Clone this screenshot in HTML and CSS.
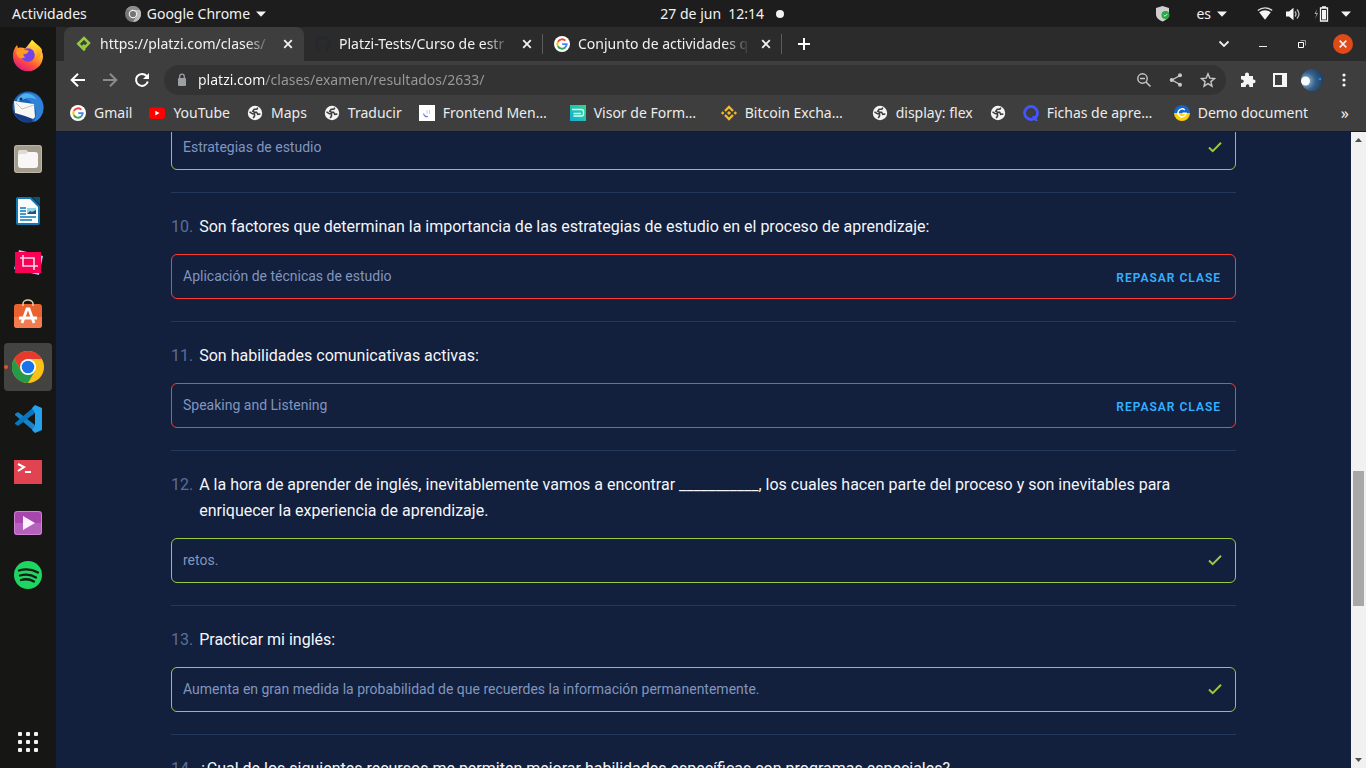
FILE: index.html
```html
<!DOCTYPE html>
<html lang="es">
<head>
<meta charset="utf-8">
<title>Resultados del examen</title>
<link rel="stylesheet" href="styles.css">
</head>
<body>
<svg class="defs" aria-hidden="true">
  <symbol id="check" viewBox="0 0 16 16"><path d="M2 8.5l3.7 3.7L14 3.8" fill="none" stroke="#98ca3f" stroke-width="2"/></symbol>
  <symbol id="close" viewBox="0 0 16 16"><path d="M4.2 4.2l7.6 7.6M11.8 4.2l-7.6 7.6" fill="none" stroke="#f1f1f1" stroke-width="1.8"/></symbol>
  <symbol id="caret" viewBox="0 0 10 6"><path d="M0 0.5h10L5 5.7z" fill="#f2f2f2"/></symbol>
  <symbol id="google" viewBox="0 0 16 16">
    <circle cx="8" cy="8" r="8" fill="#fff"/>
    <path d="M11.4 4.7A4.7 4.7 0 0 0 3.9 5.9" fill="none" stroke="#ea4335" stroke-width="1.9"/>
    <path d="M3.9 5.8a4.7 4.7 0 0 0 0 4.5" fill="none" stroke="#fbbc05" stroke-width="1.9"/>
    <path d="M3.9 10.2a4.7 4.7 0 0 0 7.3 1.3" fill="none" stroke="#34a853" stroke-width="1.9"/>
    <path d="M11.1 11.6A4.7 4.7 0 0 0 12.7 8.1H8.2" fill="none" stroke="#4285f4" stroke-width="1.9"/>
  </symbol>
  <symbol id="globe" viewBox="0 0 16 16">
    <circle cx="8" cy="8" r="7.2" fill="#f5f5f5"/>
    <path d="M2.500 6.800L5.500 8.800H7.500V11L6.200 13.200M10.800 2.600L9.800 4.300H7.200L5.800 6.200 7.400 7.200H9.600L10.800 9.300 13.400 9" fill="none" stroke="#3e3e3e" stroke-width="1.600"/>
  </symbol>
</svg>

<header class="topbar">
  <div class="topbar-group">
    <button class="plain">Actividades</button>
    <button class="plain app-menu">
      <svg width="16" height="16" viewBox="0 0 16 16"><circle cx="8" cy="8" r="8" fill="#777"/><path d="M8 4h7A8 8 0 0 1 8 16l3.500-6z" fill="#bbb"/><path d="M1 4a8 8 0 0 1 14 0H8z" fill="#8d8d8d"/><circle cx="8" cy="8" r="4.300" fill="#eee"/><circle cx="8" cy="8" r="3.100" fill="#757575"/></svg>
      <span>Google Chrome</span>
      <svg width="10" height="6"><use href="#caret"/></svg>
    </button>
  </div>
  <button class="plain clock"><span>27 de jun&nbsp; 12:14</span><i class="dot"></i></button>
  <div class="topbar-group status">
    <svg width="14" height="16" viewBox="0 0 14 16"><path d="M6.500 0L13 2v6c0 4-3 6-6.500 7.500C3 14 0 12 0 8V2z" fill="#cfcfcf"/><circle cx="9.500" cy="9" r="4" fill="#28a745"/><path d="M7.700 9l1.300 1.300 2.400-2.500" fill="none" stroke="#d8ffd8" stroke-width="1"/></svg>
    <button class="plain lang"><span>es</span><svg width="10" height="6"><use href="#caret"/></svg></button>
    <button class="plain tray" aria-label="Sistema">
      <svg width="16" height="14" viewBox="0 0 16 14"><path d="M.8 3.500a11 11 0 0 1 14.400 0" fill="none" stroke="#ddd" stroke-width="1.200"/><path d="M2.200 5.200a9.500 9.500 0 0 1 11.600 0L8 12.800z" fill="#f5f5f5"/></svg>
      <svg width="16" height="14" viewBox="0 0 16 14"><path d="M1 4.500h3L8.500.8v12.400L4 9.500H1z" fill="#f5f5f5"/><path d="M10 4.500q2 2.500 0 5M12 2.500q4 4.500 0 9" fill="none" stroke="#bbb" stroke-width="1.300"/></svg>
      <svg width="16" height="16" viewBox="0 0 16 16"><path d="M4 3L1.500 8h2L2 13l3-6H3z" fill="#aaa"/><path d="M7.500 2h7v13h-7zM9 .8h4" fill="none" stroke="#f5f5f5" stroke-width="1.300"/><path d="M9 4h4v9.500H9z" fill="#f5f5f5"/></svg>
      <svg width="10" height="6"><use href="#caret"/></svg>
    </button>
  </div>
</header>

<div class="desktop">
  <nav class="dock" aria-label="Aplicaciones">
    <button class="dock-item" aria-label="Firefox"><svg width="32" height="32" viewBox="0 0 32 32">
      <defs><linearGradient id="ff" x1=".8" y1=".1" x2=".25" y2="1"><stop offset="0" stop-color="#fff44f"/><stop offset=".35" stop-color="#ffa62b"/><stop offset=".65" stop-color="#ff5139"/><stop offset="1" stop-color="#e0118a"/></linearGradient><linearGradient id="fy" x2="0" y2="1"><stop stop-color="#fff13c"/><stop offset="1" stop-color="#ff8a16"/></linearGradient></defs>
      <path d="M20 1c3 3 5 5 6 7 3 2 5 6 5 9.500A15 15 0 0 1 1 17c0-5 1.500-8 4-11l1 3c3-.8 5-.4 7 .5 2-2 4-4.500 7-8.500z" fill="url(#ff)"/><circle cx="16" cy="16" r="6.800" fill="#7542e5"/><path d="M5 10c3-2 6-1 8 .8l4 1-2 2.700-4 1 2 3-5 1c-4-3-4-6-3-9.500z" fill="#ff9a27"/><path d="M20 1c-2 4 0 7 3 9 2 3 2 8-1 11 5-1 8-5 8-10-2-5-7-6-10-10z" fill="url(#fy)"/></svg></button>
    <button class="dock-item" aria-label="Thunderbird"><svg width="32" height="32" viewBox="0 0 32 32"><circle cx="16" cy="16" r="15.500" fill="#1d62b5"/><path d="M7 6C12-1 27 0 31 13c2 9-3 16-9 18 3-8 3-14-2-19S10 6 7 6z" fill="#2f82d8"/><path d="M5 8c5-7 14-8 20 1-8-5-12-1-20 2z" fill="#4fb2ee"/><path d="M1 19c3 9 10 13 19 12l1-6z" fill="#183a85"/><path d="M2 10l6 1 14 2 1 13-2 2-8-3-10-3z" fill="#f6f6f2"/><path d="M4 12l6 6 12-4" fill="none" stroke="#c5c3bb" stroke-width="1"/><circle cx="9" cy="8" r="1.500" fill="#132b52"/></svg></button>
    <button class="dock-item" aria-label="Archivos"><svg width="32" height="32" viewBox="0 0 32 32"><rect x="2" y="2" width="28" height="28" rx="3" fill="#a39c8c"/><rect x="2.500" y="2.500" width="27" height="27" rx="3" fill="none" stroke="#beb7a9"/><path d="M6 10c0-2 1-3 3-3h5l2 2h7c2 0 3 1 3 3v10c0 2-1 3-3 3H9c-2 0-3-1-3-3z" fill="#f8f7f5"/><path d="M6 12V9c0-1 1-2 2-2h6l2 2-2 2H8z" fill="#dedbd3"/></svg></button>
    <button class="dock-item" aria-label="Writer"><svg width="32" height="32" viewBox="0 0 32 32"><path d="M6 2h13l9 9v17q0 2-2 2H6q-2 0-2-2V4q0-2 2-2z" fill="#1379b5"/><path d="M6 4h12l8 8v16H6z" fill="#fafcfd"/><path d="M20 2h8v8z" fill="#0b4f7d"/><path d="M8 13h6m-6 3h6m-6 3h6m-6 3h16M8 25h12" stroke="#087bbb" stroke-width="1.300"/><path d="M15 13h9v6h-9z" fill="#91d2ed"/><path d="M15 19l3-3 2 1 4-2v4z" fill="#2b526a"/></svg></button>
    <button class="dock-item" aria-label="Recortes"><svg width="32" height="32" viewBox="0 0 32 32"><path d="M7 3l24 6-4 19-25-6z" fill="#a9c8ff"/><path d="M3 5h26v21H3z" fill="#f80056"/><path d="M8 11h14v12M11 8v11h15" fill="none" stroke="#ffd9e6" stroke-width="1.600"/></svg></button>
    <button class="dock-item" aria-label="Software"><svg width="32" height="32" viewBox="0 0 32 32"><rect x="2" y="5" width="28" height="24" rx="3" fill="#e96331"/><path d="M2 18h28v8q0 3-3 3H5q-3 0-3-3z" fill="#f27c4d"/><path d="M11 7V4.500a5 3.500 0 0 1 10 0V7" fill="none" stroke="#e5cfad" stroke-width="1.500"/><path d="M10 24l5-14h2l5 14M7 19h18" fill="none" stroke="#fff" stroke-width="2.800"/></svg></button>
    <button class="dock-item active" aria-label="Google Chrome"><i class="running"></i><svg width="32" height="32" viewBox="0 0 32 32"><circle cx="16" cy="16" r="16" fill="#fbc116"/><path d="M2.140 8A16 16 0 0 1 29.860 8H16L9.070 20z" fill="#e33b2e"/><path d="M2.140 8A16 16 0 0 0 16 32l6.930-12H9.070z" fill="#269a47"/><circle cx="16" cy="16" r="8" fill="#fff"/><circle cx="16" cy="16" r="6.300" fill="#1a73e8"/></svg></button>
    <button class="dock-item" aria-label="Visual Studio Code"><svg width="32" height="32" viewBox="0 0 32 32"><path d="M3 11l3-2 17 13v7L3 12z" fill="#1684cd"/><path d="M3 21l3 2 17-13V3L3 20z" fill="#0877bd"/><path d="M23 2l7 3v22l-7 3-3-3 3-4V10l-3-5z" fill="#25a2ed"/></svg></button>
    <button class="dock-item" aria-label="Terminal"><svg width="32" height="32" viewBox="0 0 32 32"><path d="M2 5h28v24H2z" fill="#e14350"/><path d="M6 9l6 3-6 4M13 17h6" fill="none" stroke="#fff" stroke-width="2"/></svg></button>
    <button class="dock-item" aria-label="Videos"><svg width="32" height="32" viewBox="0 0 32 32"><rect x="2" y="4" width="28" height="24" rx="3" fill="#a846ad"/><path d="M2 16h28v9q0 3-3 3H5q-3 0-3-3z" fill="#b562bd"/><rect x="2.500" y="4.500" width="27" height="23" rx="3" fill="none" stroke="#d184d1"/><path d="M11 9l12 7-12 7z" fill="#fff0ff"/></svg></button>
    <button class="dock-item" aria-label="Spotify"><svg width="32" height="32" viewBox="0 0 32 32"><circle cx="16" cy="16" r="14" fill="#1ed760"/><path d="M7 11.500q10-3 19 2M8 16.500q9-2.500 16 2M9 21q7-2 13 1.500" fill="none" stroke="#161b17" stroke-width="2.300" stroke-linecap="round"/></svg></button>
    <button class="dock-item apps" aria-label="Mostrar aplicaciones"><svg width="22" height="22" viewBox="0 0 22 22" fill="#f3f3f3"><rect x="1" y="1" width="4" height="4" rx="1"/><rect x="9" y="1" width="4" height="4" rx="1"/><rect x="17" y="1" width="4" height="4" rx="1"/><rect x="1" y="9" width="4" height="4" rx="1"/><rect x="9" y="9" width="4" height="4" rx="1"/><rect x="17" y="9" width="4" height="4" rx="1"/><rect x="1" y="17" width="4" height="4" rx="1"/><rect x="9" y="17" width="4" height="4" rx="1"/><rect x="17" y="17" width="4" height="4" rx="1"/></svg></button>
  </nav>

  <div class="browser">
    <div class="tabstrip">
      <div class="tab current">
        <svg width="16" height="16" viewBox="0 0 16 16"><path d="M6.900 8.900L9.100 11.100 13 7 8 2 2.200 7.800 8.800 14.400" fill="none" stroke="#98ca3f" stroke-width="2.500"/></svg>
        <span class="tab-title">https://platzi.com/clases/</span>
        <button class="tab-close" aria-label="Cerrar"><svg width="16" height="16"><use href="#close"/></svg></button>
      </div>
      <div class="tab">
        <svg width="16" height="16" viewBox="0 0 16 16"><path d="M8 .3a7.700 7.700 0 0 0-2.500 15v-2.500c-2 .3-2.600-1-3.200-1.900 1.200 0 1.600 1.300 3.200 1l.4-1c-3.500-.7-4-4-2.300-6.300V2.500l2.400.9q2-.5 4 0l2.400-.9v2.100c1.700 2.300 1.200 5.600-2.300 6.300l.5 1.200v3.200A7.700 7.700 0 0 0 8 .3z" fill="#24292f"/></svg>
        <span class="tab-title">Platzi-Tests/Curso de estr</span>
        <button class="tab-close" aria-label="Cerrar"><svg width="16" height="16"><use href="#close"/></svg></button>
      </div>
      <div class="tab">
        <svg width="16" height="16"><use href="#google"/></svg>
        <span class="tab-title">Conjunto de actividades q</span>
        <button class="tab-close" aria-label="Cerrar"><svg width="16" height="16"><use href="#close"/></svg></button>
      </div>
      <button class="new-tab" aria-label="Nueva pestaña"><svg width="14" height="14" viewBox="0 0 14 14"><path d="M7 1v12M1 7h12" stroke="#fff" stroke-width="2"/></svg></button>
      <div class="window-controls">
        <button aria-label="Buscar pestañas"><svg width="12" height="12" viewBox="0 0 12 12"><path d="M1.500 3.500L6 8l4.500-4.500" fill="none" stroke="#eee" stroke-width="1.800"/></svg></button>
        <button aria-label="Minimizar"><svg width="12" height="12" viewBox="0 0 12 12"><path d="M2 8.500h8" stroke="#eee"/></svg></button>
        <button aria-label="Restaurar"><svg width="12" height="12" viewBox="0 0 12 12"><path d="M2.500 4.500h5v5h-5z" fill="none" stroke="#fff"/><path d="M4.500 2.500h5v5" fill="none" stroke="#999"/></svg></button>
        <button class="window-close" aria-label="Cerrar ventana"><svg width="14" height="14"><use href="#close"/></svg></button>
      </div>
    </div>

    <div class="toolbar">
      <button class="tool" aria-label="Atrás"><svg width="16" height="16" viewBox="0 0 16 16"><path d="M15 8H2M8 1.700L1.700 8 8 14.300" fill="none" stroke="#fff" stroke-width="2"/></svg></button>
      <button class="tool" aria-label="Adelante"><svg width="16" height="16" viewBox="0 0 16 16"><path d="M1 8h13M8 1.700L14.300 8 8 14.300" fill="none" stroke="#8b8b8b" stroke-width="2"/></svg></button>
      <button class="tool" aria-label="Recargar"><svg width="16" height="16" viewBox="0 0 16 16"><path d="M13.800 9.500A6 6 0 1 1 12.600 4" fill="none" stroke="#fff" stroke-width="2"/><path d="M15 1v6H9z" fill="#fff"/></svg></button>
      <div class="omnibox">
        <svg width="12" height="14" viewBox="0 0 12 14"><rect x="2" y="5" width="8" height="8" rx="1" fill="#9aa0a6"/><path d="M3.700 5V3.400a2.300 2.300 0 0 1 4.600 0V5" fill="none" stroke="#9aa0a6" stroke-width="1.300"/></svg>
        <input class="url" type="text" aria-label="Dirección" value="platzi.com/clases/examen/resultados/2633/">
        <button class="tool" aria-label="Zoom"><svg width="16" height="16" viewBox="0 0 16 16"><circle cx="6.500" cy="6.500" r="4.700" fill="none" stroke="#c8c8c8" stroke-width="1.400"/><path d="M4 6.500h5M10 10l4.500 4.500" stroke="#c8c8c8" stroke-width="1.500"/></svg></button>
        <button class="tool" aria-label="Compartir"><svg width="16" height="16" viewBox="0 0 16 16"><path d="M12 3.500L4 8l8 4.500" fill="none" stroke="#c8c8c8" stroke-width="1.400"/><circle cx="12" cy="3.300" r="2" fill="#c8c8c8"/><circle cx="3.700" cy="8" r="2" fill="#c8c8c8"/><circle cx="12" cy="12.700" r="2" fill="#c8c8c8"/></svg></button>
        <button class="tool" aria-label="Marcador"><svg width="16" height="16" viewBox="0 0 16 16"><path d="M8 1.800l1.800 4.300 4.700.4-3.600 3.100 1.100 4.600L8 11.700l-4 2.500 1.100-4.600-3.600-3.100 4.700-.4z" fill="none" stroke="#c8c8c8" stroke-width="1.400"/></svg></button>
      </div>
      <button class="tool" aria-label="Extensiones"><svg width="16" height="16" viewBox="0 0 16 16"><path d="M1 4h4V2.500a2 2 0 0 1 4 0V4h4v3.500h.7a1.800 1.800 0 0 1 0 3.700H13V15H9.300v-1a1.700 1.700 0 0 0-3.500 0v1H1v-4h1a1.700 1.700 0 0 0 0-3.500H1z" fill="#f5f5f5"/></svg></button>
      <button class="tool" aria-label="Panel lateral"><svg width="16" height="16" viewBox="0 0 16 16"><path d="M1 1h14v14H1zM3 3v10h7V3z" fill="#f5f5f5" fill-rule="evenodd"/></svg></button>
      <button class="tool" aria-label="Perfil"><svg width="22" height="22" viewBox="0 0 22 22"><defs><radialGradient id="av" cx=".25" cy=".55" r=".8"><stop stop-color="#a9c6d8"/><stop offset=".5" stop-color="#34608a"/><stop offset="1" stop-color="#1d3a5c"/></radialGradient></defs><circle cx="11" cy="11" r="11" fill="url(#av)"/><circle cx="4.500" cy="12" r="4.500" fill="#f5fbff"/><circle cx="19" cy="10" r="1.300" fill="#1685ef"/></svg></button>
      <button class="tool" aria-label="Menú"><svg width="16" height="16" viewBox="0 0 16 16" fill="#f5f5f5"><circle cx="8" cy="3" r="1.600"/><circle cx="8" cy="8" r="1.600"/><circle cx="8" cy="13" r="1.600"/></svg></button>
    </div>

    <nav class="bookmarks" aria-label="Marcadores">
      <a href="#"><svg width="16" height="16"><use href="#google"/></svg><span>Gmail</span></a>
      <a href="#"><svg width="16" height="16" viewBox="0 0 16 16"><rect y="2.500" width="16" height="11.500" rx="3" fill="#f00"/><path d="M6.300 5.700L10.500 8l-4.200 2.500z" fill="#fff"/></svg><span>YouTube</span></a>
      <a href="#"><svg width="16" height="16"><use href="#globe"/></svg><span>Maps</span></a>
      <a href="#"><svg width="16" height="16"><use href="#globe"/></svg><span>Traducir</span></a>
      <a href="#"><svg width="16" height="16" viewBox="0 0 16 16"><path d="M0 0h16v16H0z" fill="#fff"/><path d="M4.500 8.500c.5 2.500 2.500 3.500 4.500 3" fill="none" stroke="#7778d4" stroke-width="1.200"/><path d="M8 5v4M10.500 5v4" stroke="#a9dce9"/></svg><span class="long">Frontend Men…</span></a>
      <a href="#"><svg width="16" height="16" viewBox="0 0 16 16"><defs><linearGradient id="vf" x1="0" y1="1" x2="1" y2="0"><stop stop-color="#12acd6"/><stop offset="1" stop-color="#35d58c"/></linearGradient></defs><path d="M0 0h16v16H0z" fill="url(#vf)"/><path d="M2 4.500h9.500a2 2 0 0 1 2 2v2.500a2 2 0 0 1-2 2H3.500M3.500 8.500h7.500" fill="none" stroke="#d6fff4" stroke-width="1.400"/></svg><span class="long">Visor de Form…</span></a>
      <a href="#"><svg width="16" height="16" viewBox="0 0 16 16"><path d="M4 6l4-4 4 4M4 10l4 4 4-4" fill="none" stroke="#f3ba2f" stroke-width="2.300"/><path d="M8 6l2 2-2 2-2-2zM1.700 6.300L3.400 8 1.700 9.700 0 8zM14.300 6.300L16 8l-1.700 1.700L12.600 8z" fill="#f3ba2f"/></svg><span class="long">Bitcoin Excha…</span></a>
      <a href="#"><svg width="16" height="16"><use href="#globe"/></svg><span>display: flex</span></a>
      <a href="#" aria-label="Marcador"><svg width="16" height="16"><use href="#globe"/></svg></a>
      <a href="#"><svg width="16" height="16" viewBox="0 0 16 16"><circle cx="8" cy="8" r="6.500" fill="none" stroke="#4255ff" stroke-width="2.800"/><path d="M9 11h3l3 5h-3z" fill="#4255ff"/></svg><span class="long">Fichas de apre…</span></a>
      <a href="#"><svg width="16" height="16" viewBox="0 0 16 16"><path d="M0 8a8 8 0 0 1 16 0z" fill="#1465c8"/><path d="M0 8a8 8 0 0 0 16 0z" fill="#fdd108"/><path d="M10.800 5A4 4 0 1 0 12 8.200H8.500" fill="none" stroke="#fff" stroke-width="1.500"/></svg><span>Demo document</span></a>
      <button class="more" aria-label="Más marcadores">»</button>
    </nav>

    <div class="viewport">
      <main class="page">
        <section class="question cut">
          <div class="answer right"><p>Estrategias de estudio</p><svg width="16" height="16"><use href="#check"/></svg></div>
        </section>
        <section class="question">
          <h2><span class="num">10.</span><span>Son factores que determinan la importancia de las estrategias de estudio en el proceso de aprendizaje:</span></h2>
          <div class="answer wrong"><p>Aplicación de técnicas de estudio</p><a href="#">REPASAR CLASE</a></div>
        </section>
        <section class="question">
          <h2><span class="num">11.</span><span>Son habilidades comunicativas activas:</span></h2>
          <div class="answer wrong"><p>Speaking and Listening</p><a href="#">REPASAR CLASE</a></div>
        </section>
        <section class="question">
          <h2><span class="num">12.</span><span>A la hora de aprender de inglés, inevitablemente vamos a encontrar ___________, los cuales hacen parte del proceso y son inevitables para enriquecer la experiencia de aprendizaje.</span></h2>
          <div class="answer right"><p>retos.</p><svg width="16" height="16"><use href="#check"/></svg></div>
        </section>
        <section class="question">
          <h2><span class="num">13.</span><span>Practicar mi inglés:</span></h2>
          <div class="answer right"><p>Aumenta en gran medida la probabilidad de que recuerdes la información permanentemente.</p><svg width="16" height="16"><use href="#check"/></svg></div>
        </section>
        <section class="question">
          <h2><span class="num">14.</span><span>¿Cual de los siguientes recursos me permiten mejorar habilidades específicas con programas especiales?</span></h2>
        </section>
      </main>
      <div class="scrollbar" aria-hidden="true">
        <svg width="15" height="15" viewBox="0 0 15 15"><path d="M4 10h7L7.500 6z" fill="#505050"/></svg>
        <div class="track"><div class="before"></div><div class="thumb"></div><div class="after"></div></div>
        <svg width="15" height="15" viewBox="0 0 15 15"><path d="M4 5h7L7.500 9z" fill="#505050"/></svg>
      </div>
    </div>
  </div>
</div>
</body>
</html>
```

FILE: styles.css
```css
* { box-sizing: border-box; }

body {
  margin: 0;
  height: 100vh;
  display: flex;
  flex-direction: column;
  overflow: hidden;
  background: #151515;
  color: #f2f2f2;
  font: 14px/20px "Noto Sans", "Open Sans", sans-serif;
}

svg { display: block; flex: none; }
.defs { position: absolute; width: 0; height: 0; }

button {
  display: flex;
  align-items: center;
  justify-content: center;
  padding: 0;
  border: 0;
  background: none;
  color: inherit;
  font: inherit;
}

/* System bar */
.topbar {
  display: flex;
  align-items: center;
  justify-content: space-between;
  height: 27px;
  padding: 0 15px 0 12px;
  background: #1d1d1d;
}
.topbar-group { display: flex; align-items: center; gap: 38px; }
.app-menu { gap: 6px; }
.clock { gap: 12px; padding-left: 22px; }
.dot { width: 8px; height: 8px; border-radius: 50%; background: #f2f2f2; }
.status { gap: 26px; }
.lang { gap: 6px; }
.tray { gap: 12px; padding-left: 4px; }

/* Desktop */
.desktop { flex: 1; display: flex; min-height: 0; }
.dock {
  width: 56px;
  display: flex;
  flex-direction: column;
  gap: 4px;
  padding: 4px 4px 2px;
  background: #161614;
}
.dock-item { position: relative; height: 48px; flex: none; border-radius: 4px; }
.dock-item.active { background: #434342; }
.running {
  position: absolute;
  left: 0;
  width: 4px;
  height: 4px;
  border-radius: 50%;
  background: #e95420;
}
.apps { margin-top: auto; }

/* Browser chrome */
.browser { flex: 1; min-width: 0; display: flex; flex-direction: column; background: #3e3e3e; }
.tabstrip {
  display: flex;
  align-items: center;
  height: 34px;
  padding: 0 13px 0 8px;
  background: #2b2b2b;
}
.tab {
  width: 239px;
  height: 20px;
  display: flex;
  align-items: center;
  gap: 8px;
  padding: 0 7px 0 11px;
  border-right: 1px solid #5c5c5c;
}
.tab.current {
  width: 240px;
  height: 34px;
  padding: 0 8px 0 12px;
  border: 0;
  border-radius: 8px 8px 0 0;
  background: #3e3e3e;
}
.tab-title {
  flex: 1;
  overflow: hidden;
  white-space: nowrap;
  -webkit-mask-image: linear-gradient(to left, transparent, #000 26px);
  mask-image: linear-gradient(to left, transparent, #000 26px);
}
.new-tab { width: 44px; height: 28px; }
.window-controls { display: flex; align-items: center; gap: 27px; margin-left: auto; }
.window-close { width: 20px; height: 20px; margin-left: -2px; border-radius: 50%; background: #e04a18; }

.toolbar { display: flex; align-items: center; height: 37px; padding: 0 6px; }
.tool { width: 32px; height: 28px; }
.omnibox {
  flex: 1;
  display: flex;
  align-items: center;
  height: 30px;
  margin: 0 6px;
  padding: 0 2px 0 12px;
  border-radius: 15px;
  background: #333;
}
.url {
  flex: 1;
  min-width: 0;
  margin-left: 10px;
  padding: 0;
  border: 0;
  outline: 0;
  font: inherit;
  color: transparent;
  background: linear-gradient(to right, #fff 67px, #9b9b9b 67px);
  -webkit-background-clip: text;
  background-clip: text;
}

.bookmarks {
  display: flex;
  align-items: center;
  gap: 17px;
  height: 34px;
  padding: 0 17px 4px 14px;
  border-bottom: 1px solid #1c1c1c;
  white-space: nowrap;
}
.bookmarks a { display: flex; align-items: center; gap: 8px; color: #ececec; text-decoration: none; }
.long { min-width: 110px; }
.more { margin-left: auto; font-size: 16px; }

/* Exam results */
.viewport { flex: 1; display: flex; min-height: 0; background: #121f3d; }
.page {
  flex: 1;
  padding: 0 115px;
  overflow: hidden;
  font-family: Roboto, sans-serif;
}
.question { padding: 21px 0 22px; border-top: 1px solid #24385b; }
.question.cut { margin-top: -7px; padding-top: 0; border-top: 0; }
.question h2 {
  display: flex;
  gap: 6px;
  margin: 0 0 14px;
  color: #f4f6fa;
  font-size: 16px;
  font-weight: 400;
  line-height: 26px;
}
.num { color: #5a6f98; }
.answer {
  display: flex;
  align-items: center;
  justify-content: space-between;
  height: 45px;
  padding: 0 12px 2px 11px;
  border: 1px solid;
  border-radius: 6px;
}
.answer p { margin: 0; color: #8096bd; }
.answer.right { border-color: #98ca3f; }
.answer.wrong { border-color: #ff3b30; }
.answer a {
  padding: 4px 2px 0 0;
  color: #33b1ff;
  font-size: 12px;
  font-weight: 600;
  letter-spacing: 1px;
  text-decoration: none;
}

.scrollbar { width: 15px; display: flex; flex-direction: column; background: #f1f1f1; }
.track { flex: 1; display: flex; flex-direction: column; padding: 0 2px; }
.before { flex: 324; }
.thumb { flex: 135; background: #a8a8a8; }
.after { flex: 147; }
```
